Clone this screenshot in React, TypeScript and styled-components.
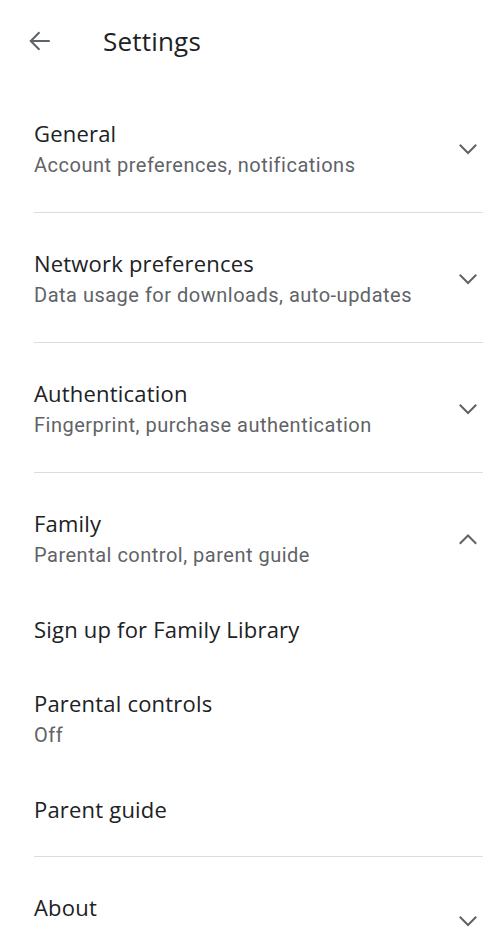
import React from 'react';
import styled, { createGlobalStyle } from 'styled-components';

const GlobalStyle = createGlobalStyle`
  html, body {
    margin: 0;
    padding: 0;
    background: #ffffff;
  }
  body {
    font-family: Roboto, "Noto Sans", Arial, sans-serif;
    -webkit-font-smoothing: antialiased;
  }
`;

const Page = styled.div`
  width: 504px;
  height: 934px;
  overflow: hidden;
  background: #ffffff;
`;

const TopBar = styled.div`
  height: 83px;
  display: flex;
  align-items: center;
  padding-left: 24px;
  padding-bottom: 2px;
  box-sizing: border-box;
`;

const BackButton = styled.button`
  width: 32px;
  height: 32px;
  padding: 0;
  border: none;
  background: none;
  display: flex;
  align-items: center;
  justify-content: center;
  color: #5f6368;
  margin-right: 47px;
`;

const PageTitle = styled.h1`
  margin: 0;
  font-family: "Open Sans", Roboto, sans-serif;
  font-size: 26px;
  font-weight: 400;
  color: #202124;
  letter-spacing: 0.2px;
`;

const Section = styled.section<{ $last?: boolean }>`
  margin: 0 21px 0 34px;
  padding: 36px 0 33px;
  border-bottom: ${p => (p.$last ? 'none' : '1px solid #dadce0')};
`;

const SectionHeader = styled.div`
  display: flex;
  align-items: center;
  justify-content: space-between;
`;

const TextBlock = styled.div`
  display: flex;
  flex-direction: column;
  gap: 4px;
`;

const Title = styled.div`
  font-family: "Open Sans", Roboto, sans-serif;
  font-size: 22px;
  line-height: 28px;
  letter-spacing: 0.2px;
  color: #202124;
`;

const Subtitle = styled.div`
  font-family: Roboto, sans-serif;
  font-size: 20px;
  line-height: 28px;
  letter-spacing: 0.5px;
  color: #5f6368;
`;

const Chevron = styled.svg<{ $drop?: number }>`
  width: 24px;
  height: 24px;
  margin-right: 3px;
  transform: translateY(${p => p.$drop ?? 0}px);
  flex-shrink: 0;
`;

const SubList = styled.div`
  display: flex;
  flex-direction: column;
  gap: 46px;
  margin-top: 46px;
`;

type SettingsSection = {
  title: string;
  subtitle?: string;
  open?: boolean;
  items?: { title: string; subtitle?: string }[];
};

const sections: SettingsSection[] = [
  { title: 'General', subtitle: 'Account preferences, notifications' },
  { title: 'Network preferences', subtitle: 'Data usage for downloads, auto-updates' },
  { title: 'Authentication', subtitle: 'Fingerprint, purchase authentication' },
  {
    title: 'Family',
    subtitle: 'Parental control, parent guide',
    open: true,
    items: [
      { title: 'Sign up for Family Library' },
      { title: 'Parental controls', subtitle: 'Off' },
      { title: 'Parent guide' },
    ],
  },
  // the about row runs past the bottom of the screen, only its title shows
  { title: 'About' },
];

function ChevronIcon({ up, drop }: { up?: boolean; drop?: number }) {
  return (
    <Chevron $drop={drop} viewBox="0 0 24 24" fill="none" stroke="#5f6368" strokeWidth="2" strokeLinecap="square">
      {up ? <polyline points="4.5,16 12,8.5 19.5,16" /> : <polyline points="4.5,8.5 12,16 19.5,8.5" />}
    </Chevron>
  );
}

function App() {
  return (
    <Page>
      <GlobalStyle />
      <TopBar>
        <BackButton aria-label="Back">
          <svg width="26" height="26" viewBox="0 0 24 24" fill="none" stroke="#5f6368" strokeWidth="1.9">
            <line x1="3.5" y1="12" x2="21" y2="12" />
            <polyline points="11.5,4 3.5,12 11.5,20" />
          </svg>
        </BackButton>
        <PageTitle>Settings</PageTitle>
      </TopBar>
      {sections.map((s, i) => (
        <Section key={s.title} $last={i === sections.length - 1}>
          <SectionHeader>
            <TextBlock>
              <Title>{s.title}</Title>
              {s.subtitle && <Subtitle>{s.subtitle}</Subtitle>}
            </TextBlock>
            <ChevronIcon up={s.open} drop={s.subtitle ? 0 : 14} />
          </SectionHeader>
          {s.open && s.items && (
            <SubList>
              {s.items.map(item => (
                <TextBlock key={item.title}>
                  <Title>{item.title}</Title>
                  {item.subtitle && <Subtitle>{item.subtitle}</Subtitle>}
                </TextBlock>
              ))}
            </SubList>
          )}
        </Section>
      ))}
    </Page>
  );
}

export default App;
